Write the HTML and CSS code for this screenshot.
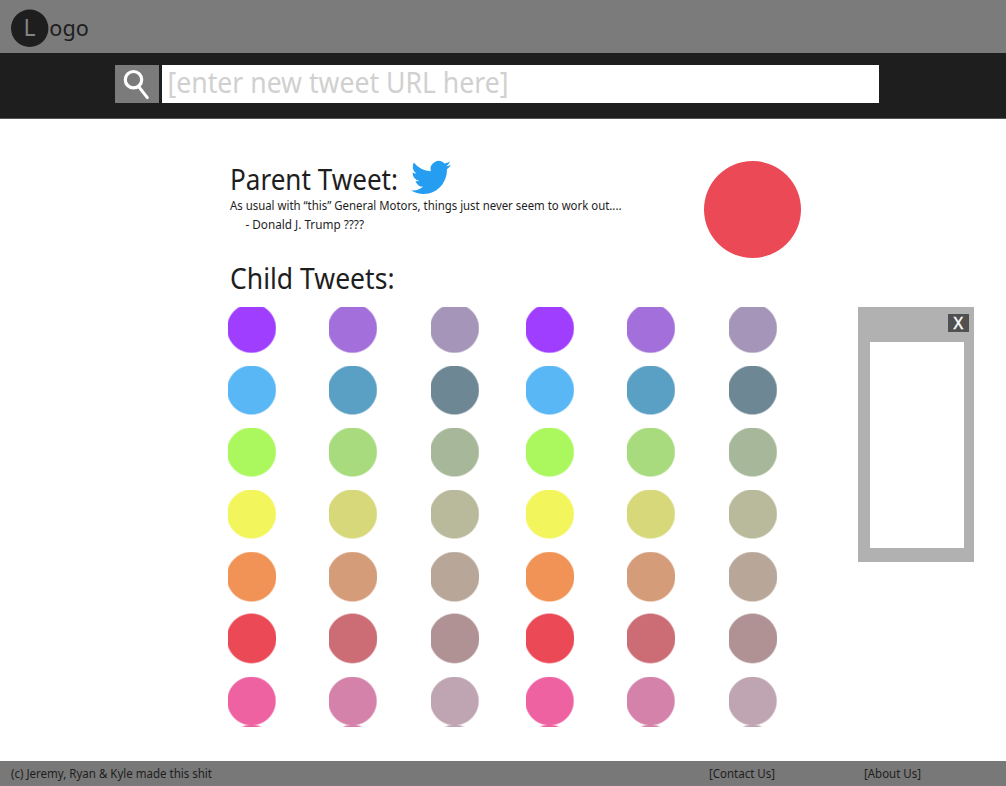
FILE: index.html
```html
<!DOCTYPE html>
<html lang="en">
<head>
<meta charset="utf-8">
<title>Tweets</title>
<link rel="stylesheet" href="styles.css">
</head>
<body>
<header class="top">
  <svg class="logo" width="100" height="53">
    <circle cx="29.7" cy="28.3" r="18.7" fill="#1e1e1e"/>
    <text class="logo-initial" x="23.5" y="36" font-size="23.5" textLength="12" lengthAdjust="spacingAndGlyphs">L</text>
    <text x="49.3" y="36" font-size="22.5" textLength="39.5" lengthAdjust="spacingAndGlyphs">ogo</text>
  </svg>
</header>
<div class="search">
  <div class="search-btn">
    <svg width="44" height="38" fill="none" stroke="#fff">
      <circle cx="18.5" cy="14.7" r="8.2" stroke-width="3.2"/>
      <path d="M24 22L32.3 32.6" stroke-width="3" stroke-linecap="round"/>
    </svg>
  </div>
  <div class="search-field">
    <svg width="400" height="38"><text class="placeholder" x="5.5" y="28" font-size="29" textLength="341" lengthAdjust="spacingAndGlyphs">[enter new tweet URL here]</text></svg>
  </div>
</div>
<main class="main">
  <div class="content">
    <section class="parent">
      <div class="parent-text">
        <div class="title-row">
          <svg class="title" width="181" height="36"><text x="0" y="30" font-size="29" textLength="168" lengthAdjust="spacingAndGlyphs">Parent Tweet:</text></svg>
          <svg class="bird" width="40" height="33" viewBox="0 0 24 19.5" preserveAspectRatio="none" fill="#259df1"><path d="M24 2.3a9.8 9.8 0 0 1-2.83.78A4.94 4.94 0 0 0 23.34.35a9.9 9.9 0 0 1-3.13 1.2A4.92 4.92 0 0 0 11.83 6 13.97 13.97 0 0 1 1.67.9a4.93 4.93 0 0 0 1.52 6.57 4.9 4.9 0 0 1-2.23-.62v.06a4.92 4.92 0 0 0 3.95 4.83 5 5 0 0 1-2.22.08 4.93 4.93 0 0 0 4.6 3.42A9.9 9.9 0 0 1 0 17.3a13.94 13.94 0 0 0 7.55 2.2c9.06 0 14-7.5 14-14l-.01-.63A10 10 0 0 0 24 2.3z"/></svg>
        </div>
        <svg class="line" width="420" height="19"><text x="0" y="13" font-size="12.8" textLength="391.5" lengthAdjust="spacingAndGlyphs">As usual with “this” General Motors, things just never seem to work out....</text></svg>
        <svg class="line" width="420" height="19"><text x="15.5" y="13" font-size="12.8" textLength="118.5" lengthAdjust="spacingAndGlyphs">- Donald J. Trump ????</text></svg>
      </div>
      <div class="big-dot"></div>
    </section>
    <svg class="child-title" width="200" height="48"><text x="0" y="30" font-size="29" textLength="164.5" lengthAdjust="spacingAndGlyphs">Child Tweets:</text></svg>
    <div class="grid">
      <i class="dot first purple1"></i><i class="dot first purple2"></i><i class="dot first purple3"></i><i class="dot first purple1"></i><i class="dot first purple2"></i><i class="dot first purple3"></i>
      <i class="dot blue1"></i><i class="dot blue2"></i><i class="dot blue3"></i><i class="dot blue1"></i><i class="dot blue2"></i><i class="dot blue3"></i>
      <i class="dot green1"></i><i class="dot green2"></i><i class="dot green3"></i><i class="dot green1"></i><i class="dot green2"></i><i class="dot green3"></i>
      <i class="dot yellow1"></i><i class="dot yellow2"></i><i class="dot yellow3"></i><i class="dot yellow1"></i><i class="dot yellow2"></i><i class="dot yellow3"></i>
      <i class="dot tall orange1"></i><i class="dot tall orange2"></i><i class="dot tall orange3"></i><i class="dot tall orange1"></i><i class="dot tall orange2"></i><i class="dot tall orange3"></i>
      <i class="dot tall low red1"></i><i class="dot tall low red2"></i><i class="dot tall low red3"></i><i class="dot tall low red1"></i><i class="dot tall low red2"></i><i class="dot tall low red3"></i>
      <i class="dot last pink1"></i><i class="dot last pink2"></i><i class="dot last pink3"></i><i class="dot last pink1"></i><i class="dot last pink2"></i><i class="dot last pink3"></i>
    </div>
  </div>
  <aside class="panel">
    <div class="close"><svg width="21" height="18"><text class="close-x" x="5.5" y="14.7" font-size="16" textLength="9.6" lengthAdjust="spacingAndGlyphs">X</text></svg></div>
    <div class="panel-body"></div>
  </aside>
</main>
<footer class="footer">
  <svg width="698" height="25"><text x="0" y="17" font-size="12.6" textLength="201" lengthAdjust="spacingAndGlyphs">(c) Jeremy, Ryan &amp; Kyle made this shit</text></svg>
  <svg width="155" height="25"><text x="0" y="17" font-size="12.6" textLength="66" lengthAdjust="spacingAndGlyphs">[Contact Us]</text></svg>
  <svg width="100" height="25"><text x="0" y="17" font-size="12.6" textLength="57" lengthAdjust="spacingAndGlyphs">[About Us]</text></svg>
</footer>
</body>
</html>
```
FILE: styles.css
```css
* { box-sizing: border-box; }
body {
  margin: 0;
  width: 1006px;
  height: 786px;
  overflow: hidden;
  display: flex;
  flex-direction: column;
  background: #fff;
  font-family: "Noto Sans", "Open Sans", sans-serif;
}
svg { display: block; flex: none; overflow: visible; }
text { fill: #1e1e1e; }
.logo-initial { fill: #858585; }
.placeholder { fill: #d0d0d0; }
.close-x { fill: #fff; stroke: #fff; stroke-width: 0.4px; }
.top { height: 53px; background: #7b7b7b; }
.search {
  height: 66px;
  padding: 12px 0 0 115px;
  display: flex;
  gap: 3px;
  background: #1e1e1e;
  border-bottom: 1px solid #555;
}
.search-btn { width: 44px; height: 38px; background: #7b7b7b; }
.search-field { width: 717px; height: 38px; background: #fff; }
.main { height: 642px; display: flex; padding-left: 228px; }
.content { width: 630px; padding-top: 42px; }
.parent { display: flex; height: 98px; }
.parent-text { width: 476px; padding-left: 2px; }
.title-row { display: flex; height: 36px; }
.title { margin-top: -1px; }
.big-dot { width: 97px; height: 97px; border-radius: 50%; background: #ec4957; }
.child-title { margin-left: 2px; }
.grid {
  display: grid;
  grid-template-columns: 101px 102px 95px 101px 102px 48px;
  grid-template-rows: 59px 62px 62px 62px 61px 64px 50px;
}
.dot {
  --y: 24px;
  --r: 23.7px;
  width: 48px;
  height: 49px;
  background: radial-gradient(circle at 23.5px var(--y), var(--c) var(--r), transparent calc(var(--r) + 1.6px));
}
.first { --y: 21.3px; height: 46px; }
.tall { --y: 24.7px; --r: 24px; height: 50px; }
.low { --y: 25.4px; height: 51px; }
.last {
  height: 50px;
  background:
    radial-gradient(ellipse 11px 3.4px at 23.5px 50.5px, var(--c) 60%, transparent 100%),
    radial-gradient(circle at 23.5px 24px, var(--c) 23.5px, transparent 25px);
}
.purple1 { --c: #a03eff; }
.purple2 { --c: #a36fdb; }
.purple3 { --c: #a495b9; }
.blue1 { --c: #58b7f4; }
.blue2 { --c: #5a9fc4; }
.blue3 { --c: #6d8794; }
.green1 { --c: #aaf85d; }
.green2 { --c: #a8da7e; }
.green3 { --c: #a7b89a; }
.yellow1 { --c: #f3f55d; }
.yellow2 { --c: #d6d87a; }
.yellow3 { --c: #b8ba9b; }
.orange1 { --c: #f19356; }
.orange2 { --c: #d59c79; }
.orange3 { --c: #b8a699; }
.red1 { --c: #ec4957; }
.red2 { --c: #cc6d75; }
.red3 { --c: #b09294; }
.pink1 { --c: #ee62a2; }
.pink2 { --c: #d482a9; }
.pink3 { --c: #bea5b1; }
.panel {
  width: 116px;
  height: 255px;
  margin-top: 188px;
  padding: 7px 5px 0 12px;
  background: #b1b1b1;
}
.close { width: 21px; height: 18px; margin-left: auto; background: #505050; }
.panel-body { width: 94px; height: 206px; margin-top: 10px; background: #fff; }
.footer {
  height: 25px;
  display: flex;
  padding-left: 11px;
  background: #787878;
}
```
